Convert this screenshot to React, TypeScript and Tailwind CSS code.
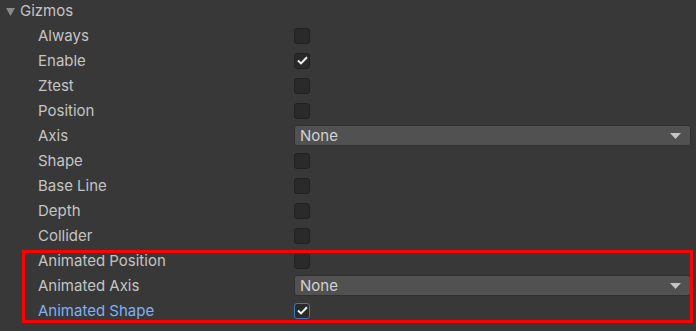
import React from "react";

type Row = { label: string; kind: "check" | "select"; checked?: boolean; focus?: boolean };

const rows: Row[] = [
  { label: "Always", kind: "check" },
  { label: "Enable", kind: "check", checked: true },
  { label: "Ztest", kind: "check" },
  { label: "Position", kind: "check" },
  { label: "Axis", kind: "select" },
  { label: "Shape", kind: "check" },
  { label: "Base Line", kind: "check" },
  { label: "Depth", kind: "check" },
  { label: "Collider", kind: "check" },
  { label: "Animated Position", kind: "check" },
  { label: "Animated Axis", kind: "select" },
  { label: "Animated Shape", kind: "check", checked: true, focus: true },
];

function Check({ checked, focus }: { checked?: boolean; focus?: boolean }) {
  return (
    <div
      className={`w-4 h-4 rounded-[3px] flex items-center justify-center bg-[#2a2a2a] border ${
        focus ? "border-[#3a79bb]" : "border-[#212121]"
      }`}
    >
      {checked && (
        <svg width="11" height="9" viewBox="0 0 11 9">
          <path d="M1 4.6 L4 7.4 L10 1.2" fill="none" stroke="#f0f0f0" strokeWidth="2" />
        </svg>
      )}
    </div>
  );
}

function Select() {
  return (
    <div className="flex-1 h-[21px] mr-[5px] rounded-[3px] bg-[#515151] border border-[#303030] flex items-center pl-[5px] pr-[9px] text-[#d2d2d2]">
      <span className="flex-1 pt-[1px]">None</span>
      <svg width="11" height="6" viewBox="0 0 11 6">
        <path d="M0 0 H11 L5.5 6 Z" fill="#c4c4c4" />
      </svg>
    </div>
  );
}

function Field({ row }: { row: Row }) {
  return (
    <div className="h-[25px] flex items-center">
      <div className={`w-[272px] pl-[16px] pt-[2px] ${row.focus ? "text-[#7fb0f5]" : "text-[#c4c4c4]"}`}>
        {row.label}
      </div>
      {row.kind === "check" ? <Check checked={row.checked} focus={row.focus} /> : <Select />}
    </div>
  );
}

export default function App() {
  return (
    <div
      className="relative w-[696px] h-[331px] bg-[#383838] text-[15px] overflow-hidden"
      style={{ fontFamily: "Inter, 'Noto Sans', sans-serif" }}
    >
      <div className="h-[22px] flex items-center pl-[6px] pt-[1px] text-[#c4c4c4]">
        <svg width="9" height="8" viewBox="0 0 9 8" className="mr-[5px]">
          <path d="M0 0 H9 L4.5 8 Z" fill="#8a8a8a" />
        </svg>
        <span>Gizmos</span>
      </div>
      <div className="pl-[22px] pt-[1px]">
        {rows.map((r) => (
          <Field key={r.label} row={r} />
        ))}
      </div>
      {/* highlight box */}
      <div className="absolute left-[22px] top-[250px] w-[671px] h-[73px] border-[3px] border-[#ff0000] pointer-events-none" />
    </div>
  );
}
